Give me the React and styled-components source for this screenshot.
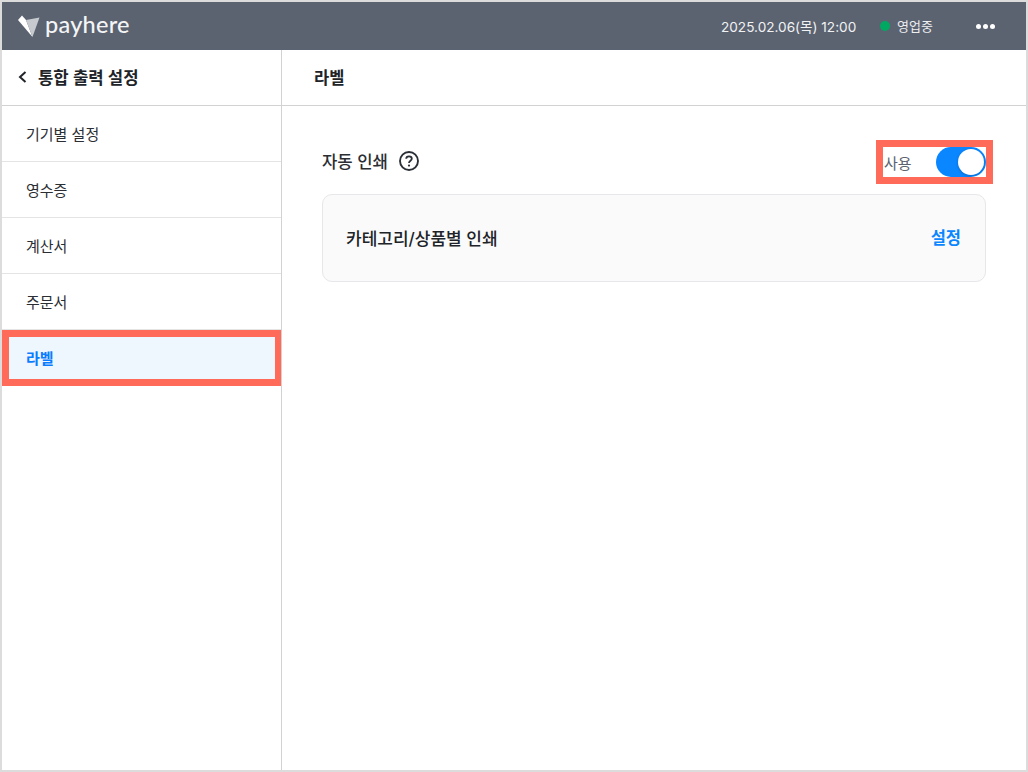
import React from "react";
import styled, { createGlobalStyle } from "styled-components";

const Global = createGlobalStyle`
  html, body { margin: 0; padding: 0; background: #fff; }
  * { box-sizing: border-box; }
  body { font-family: "Inter", "Noto Sans CJK KR", sans-serif; }
`;
const Frame = styled.div`
  width: 1028px; height: 772px; border: 2px solid #dcdcdc;
  display: flex; flex-direction: column; background: #fff; overflow: hidden;
`;
const TopBar = styled.header`
  height: 48px; flex: none; background: #5b6270; display: flex; align-items: center;
  padding: 0 31px 0 16px; color: #fff;
`;
const Logo = styled.div`display: flex; align-items: center; gap: 5px;`;
const LogoText = styled.span`
  font-family: "Lato", sans-serif; font-size: 23.5px; font-weight: 500; letter-spacing: 0.25px; line-height: 1; color: #f4f5f6; margin-top: -2px;
`;
const Spacer = styled.div`flex: 1;`;
const DateText = styled.span`font-size: 13.6px; color: #f1f2f4; width: 136px; white-space: nowrap; margin-top: -1px;`;
const Status = styled.div`
  display: flex; align-items: center; gap: 7px; margin-left: 23px; width: 96px;
  font-size: 13px; color: #eceef0; margin-top: -1px;
`;
const Dot = styled.i`width: 10px; height: 10px; border-radius: 50%; background: #00a862; display: block;`;
const More = styled.div`display: flex; gap: 2px;`;
const MoreDot = styled.i`width: 5px; height: 5px; border-radius: 50%; background: #fff; display: block;`;
const Body = styled.div`flex: 1; display: flex; min-height: 0;`;
const Side = styled.aside`width: 280px; flex: none; border-right: 1px solid #d2d2d2;`;
const SideHead = styled.div`
  height: 56px; border-bottom: 1px solid #d2d2d2; display: flex; align-items: center; gap: 8px;
  padding: 0 0 2px 14px; font-size: 16.7px; font-weight: 600; color: #202328;
`;
const Row = styled.div`
  height: 56px; display: flex; align-items: center; font-size: 15px;
  padding-left: ${p => (p.$active ? "17px" : "24px")};
  padding-bottom: ${p => (p.$active ? "2px" : "1px")};
  color: ${p => (p.$active ? "#0a7cff" : "#2b2e33")};
  font-weight: ${p => (p.$active ? 600 : 400)};
  background: ${p => (p.$active ? "#eff7fe" : "#fff")};
  border: ${p => (p.$active ? "7px solid #ff6b58" : "none")};
  border-bottom: ${p => (p.$active ? "7px solid #ff6b58" : "1px solid #e4e4e4")};
  border-right-width: ${p => (p.$active ? "6px" : "0")};
`;
const Main = styled.main`flex: 1; display: flex; flex-direction: column;`;
const MainHead = styled.div`
  height: 56px; border-bottom: 1px solid #d2d2d2; display: flex; align-items: center;
  padding: 0 0 2px 32px; font-size: 16.5px; font-weight: 600; color: #202328;
`;
const Content = styled.div`padding: 34px 40px 0 40px;`;
const AutoRow = styled.div`display: flex; align-items: center; justify-content: space-between; height: 44px; margin-bottom: 10px;`;
const AutoTitle = styled.div`display: flex; align-items: center; gap: 10px; font-size: 16.7px; font-weight: 500; color: #2b2e33; padding-bottom: 3px;`;
const ToggleBox = styled.div`
  width: 117px; height: 44px; margin-right: -7px; border: 7px solid #ff6b58;
  background: #fff; display: flex; align-items: center; justify-content: space-between;
  font-size: 15px; color: #5b6270; padding-left: 1px;
`;
const Toggle = styled.div`
  width: 50px; height: 30px; border-radius: 15px; background: #0a86ff; position: relative; flex: none;
`;
const Knob = styled.div`
  position: absolute; top: 2px; right: 2px; width: 26px; height: 26px; border-radius: 50%; background: #fff;
  box-shadow: 0 1px 3px rgba(0,0,0,.2);
`;
const Card = styled.div`
  height: 88px; border: 1px solid #e6e7ea; border-radius: 10px; background: #fafafa;
  display: flex; align-items: center; justify-content: space-between; padding: 0 24px 2px 23px;
`;
const CardTitle = styled.span`font-size: 17px; font-weight: 500; color: #202328;`;
const CardLink = styled.span`font-size: 16.5px; font-weight: 600; color: #0a86ff;`;

const LogoMark = () => (
  <svg width="22" height="22" viewBox="0 0 22 22">
    <path d="M4 0.5 L0 5 L14.5 22 L8 5 Z" fill="#fff" />
    <path d="M8 5 L21.5 2.5 L14.5 22 Z" fill="#c6c9ce" />
  </svg>
);
const Back = () => (
  <svg width="14" height="14" viewBox="0 0 14 14">
    <path d="M9.5 2 L4 7 L9.5 12" fill="none" stroke="#202328" strokeWidth="2" />
  </svg>
);
const Help = () => (
  <svg width="22" height="22" viewBox="0 0 22 22">
    <circle cx="11" cy="11" r="9" fill="none" stroke="#2b3038" strokeWidth="1.9" />
    <path d="M8.2 8.8 C8.2 7.2 9.5 6.3 11 6.3 C12.6 6.3 13.8 7.3 13.8 8.7 C13.8 10.6 11 10.8 11 12.9" fill="none" stroke="#2b3038" strokeWidth="1.8" />
    <circle cx="11" cy="15.6" r="1.1" fill="#2b3038" />
  </svg>
);

export default function App() {
  return (
    <>
      <Global />
      <Frame>
        <TopBar>
          <Logo><LogoMark /><LogoText>payhere</LogoText></Logo>
          <Spacer />
          <DateText>2025.02.06(목) 12:00</DateText>
          <Status><Dot />영업중</Status>
          <More><MoreDot /><MoreDot /><MoreDot /></More>
        </TopBar>
        <Body>
          <Side>
            <SideHead><Back />통합 출력 설정</SideHead>
            <Row>기기별 설정</Row>
            <Row>영수증</Row>
            <Row>계산서</Row>
            <Row>주문서</Row>
            <Row $active>라벨</Row>
          </Side>
          <Main>
            <MainHead>라벨</MainHead>
            <Content>
              <AutoRow>
                <AutoTitle>자동 인쇄<Help /></AutoTitle>
                <ToggleBox>사용<Toggle><Knob /></Toggle></ToggleBox>
              </AutoRow>
              <Card>
                <CardTitle>카테고리/상품별 인쇄</CardTitle>
                <CardLink>설정</CardLink>
              </Card>
            </Content>
          </Main>
        </Body>
      </Frame>
    </>
  );
}
